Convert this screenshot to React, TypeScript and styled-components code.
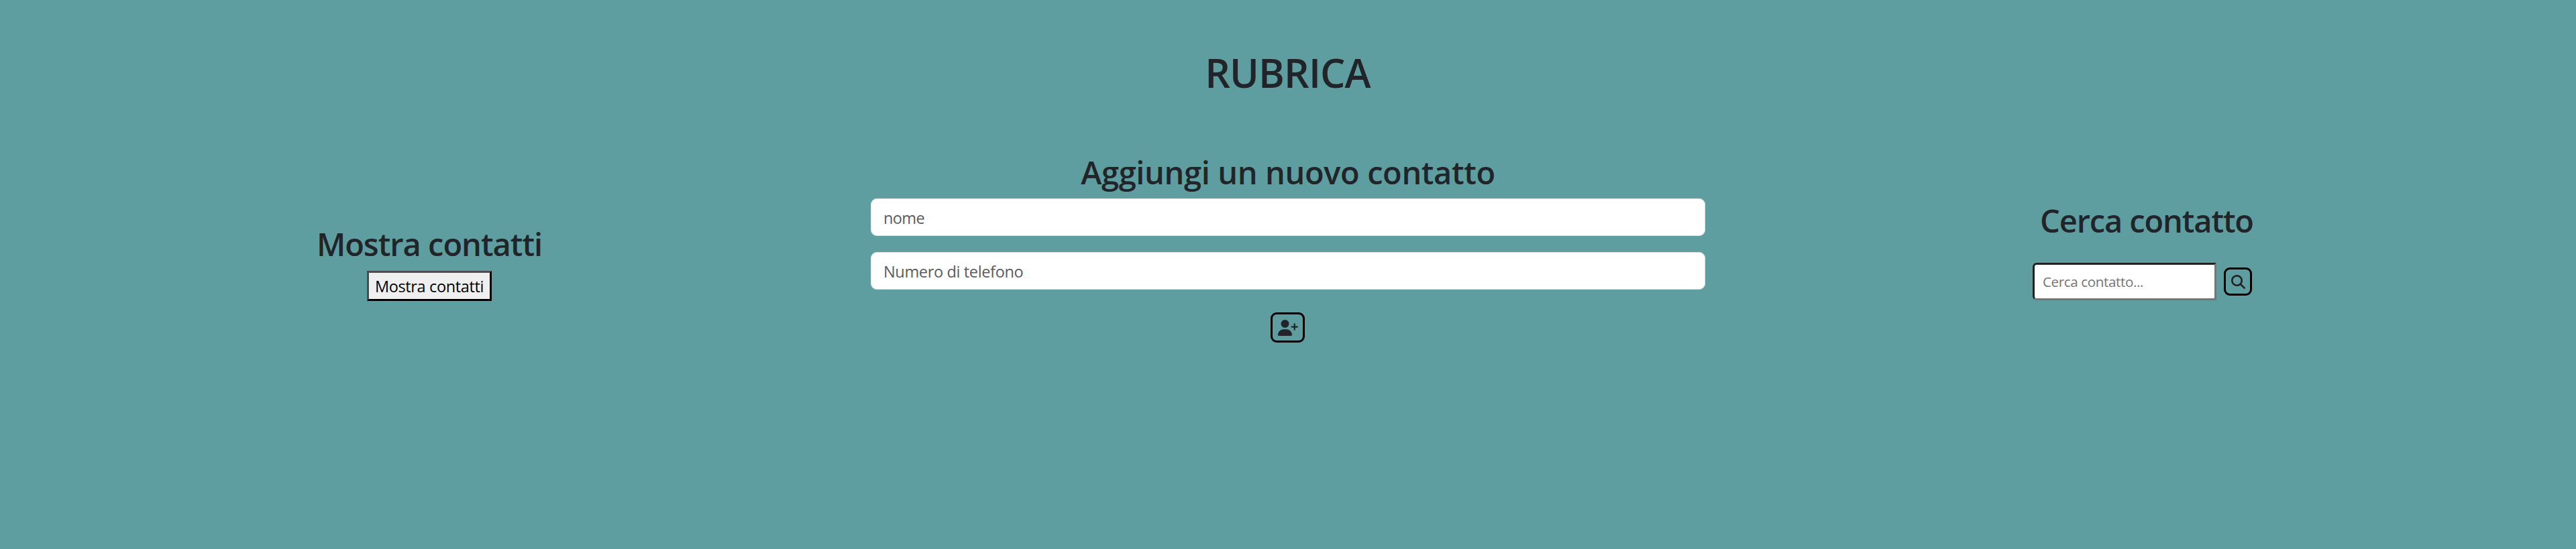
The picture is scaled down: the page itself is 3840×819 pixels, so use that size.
import React from 'react';
import styled, { createGlobalStyle } from 'styled-components';
import { FaMagnifyingGlass, FaUserPlus } from 'react-icons/fa6';

const GlobalStyle = createGlobalStyle`
  *, *::before, *::after { box-sizing: border-box; }
  html, body { margin: 0; background: #5f9ea0; }
  body {
    color: #212529;
    font-family: 'Open Sans', 'Noto Sans', sans-serif;
    font-size: 23.5px;
    line-height: 36px;
  }
`;

const Page = styled.div`
  min-height: 819px;
  padding-top: 72px;
  background: #5f9ea0;
`;

const Title = styled.h1`
  margin: 0;
  text-align: center;
  font-size: 59px;
  font-weight: 600;
  line-height: 72px;
  letter-spacing: -0.85px;
  padding-right: 1px;
`;

const Columns = styled.main`
  display: grid;
  grid-template-columns: repeat(3, 1280px);
  align-items: start;
`;

const Column = styled.section<{ $top: number }>`
  display: flex;
  flex-direction: column;
  align-items: center;
  padding: ${(p) => p.$top}px 18px 0;
`;

const Heading = styled.h2<{ $tracking: number; $gap: number }>`
  margin: 0 0 ${(p) => p.$gap}px;
  font-size: 47px;
  font-weight: 600;
  line-height: 58px;
  letter-spacing: ${(p) => p.$tracking}px;
  white-space: nowrap;
`;

const ShowButton = styled.button`
  width: 186px;
  height: 45px;
  padding: 0;
  border: 3px solid;
  border-color: #4c4c4c #000 #000 #4c4c4c;
  background: #efefef;
  color: #000;
  font: inherit;
  letter-spacing: -0.36px;
  white-space: nowrap;
`;

const Form = styled.form`
  display: flex;
  flex-direction: column;
  align-items: center;
  width: 100%;
`;

const Field = styled.input<{ $tracking: number; $gap: number }>`
  width: 100%;
  height: 56px;
  margin-bottom: ${(p) => p.$gap}px;
  padding: 2px 18px 0;
  border: 1px solid #dee2e6;
  border-radius: 9px;
  background: #fff;
  font: inherit;
  letter-spacing: ${(p) => p.$tracking}px;
  &::placeholder { color: #595c5f; opacity: 1; }
`;

const IconButton = styled.button<{ $w: number; $h: number }>`
  display: flex;
  align-items: center;
  justify-content: center;
  width: ${(p) => p.$w}px;
  height: ${(p) => p.$h}px;
  padding: 0;
  border: 3px solid #000;
  border-radius: 9px;
  background: transparent;
  color: #212529;
`;

const AddButton = styled(IconButton)`
  margin-right: 1px;
  padding-left: 1px;
`;

const PersonIcon = styled(FaUserPlus)`
  width: 30px;
  height: 24px;
`;

const SearchRow = styled.form`
  display: flex;
  align-items: center;
  gap: 11px;
  margin-right: 13px;
`;

const SearchField = styled.input`
  width: 274px;
  height: 56px;
  padding: 0 12px;
  border: 3px solid;
  border-color: #212121 #767676 #767676 #212121;
  border-radius: 6px 0 0 6px;
  background: #fff;
  font: inherit;
  font-size: 20.6px;
  letter-spacing: -0.38px;
  &::placeholder { color: #757575; opacity: 1; }
`;

export default function App() {
  return (
    <>
      <GlobalStyle />
      <Page>
        <Title>RUBRICA</Title>
        <Columns>
          <Column $top={191}>
            <Heading $tracking={-1} $gap={11}>Mostra contatti</Heading>
            <ShowButton type="button">Mostra contatti</ShowButton>
          </Column>
          <Column $top={84}>
            <Heading $tracking={-0.38} $gap={10}>Aggiungi un nuovo contatto</Heading>
            <Form>
              <Field $tracking={-0.6} $gap={24} placeholder="nome" />
              <Field $tracking={-0.35} $gap={34} placeholder="Numero di telefono" />
              <AddButton type="button" $w={51} $h={45} aria-label="Aggiungi">
                <PersonIcon />
              </AddButton>
            </Form>
          </Column>
          <Column $top={156}>
            <Heading $tracking={-1.12} $gap={34}>Cerca contatto</Heading>
            <SearchRow>
              <SearchField placeholder="Cerca contatto..." />
              <IconButton type="button" $w={42} $h={42} aria-label="Cerca">
                <FaMagnifyingGlass size={21} />
              </IconButton>
            </SearchRow>
          </Column>
        </Columns>
      </Page>
    </>
  );
}
